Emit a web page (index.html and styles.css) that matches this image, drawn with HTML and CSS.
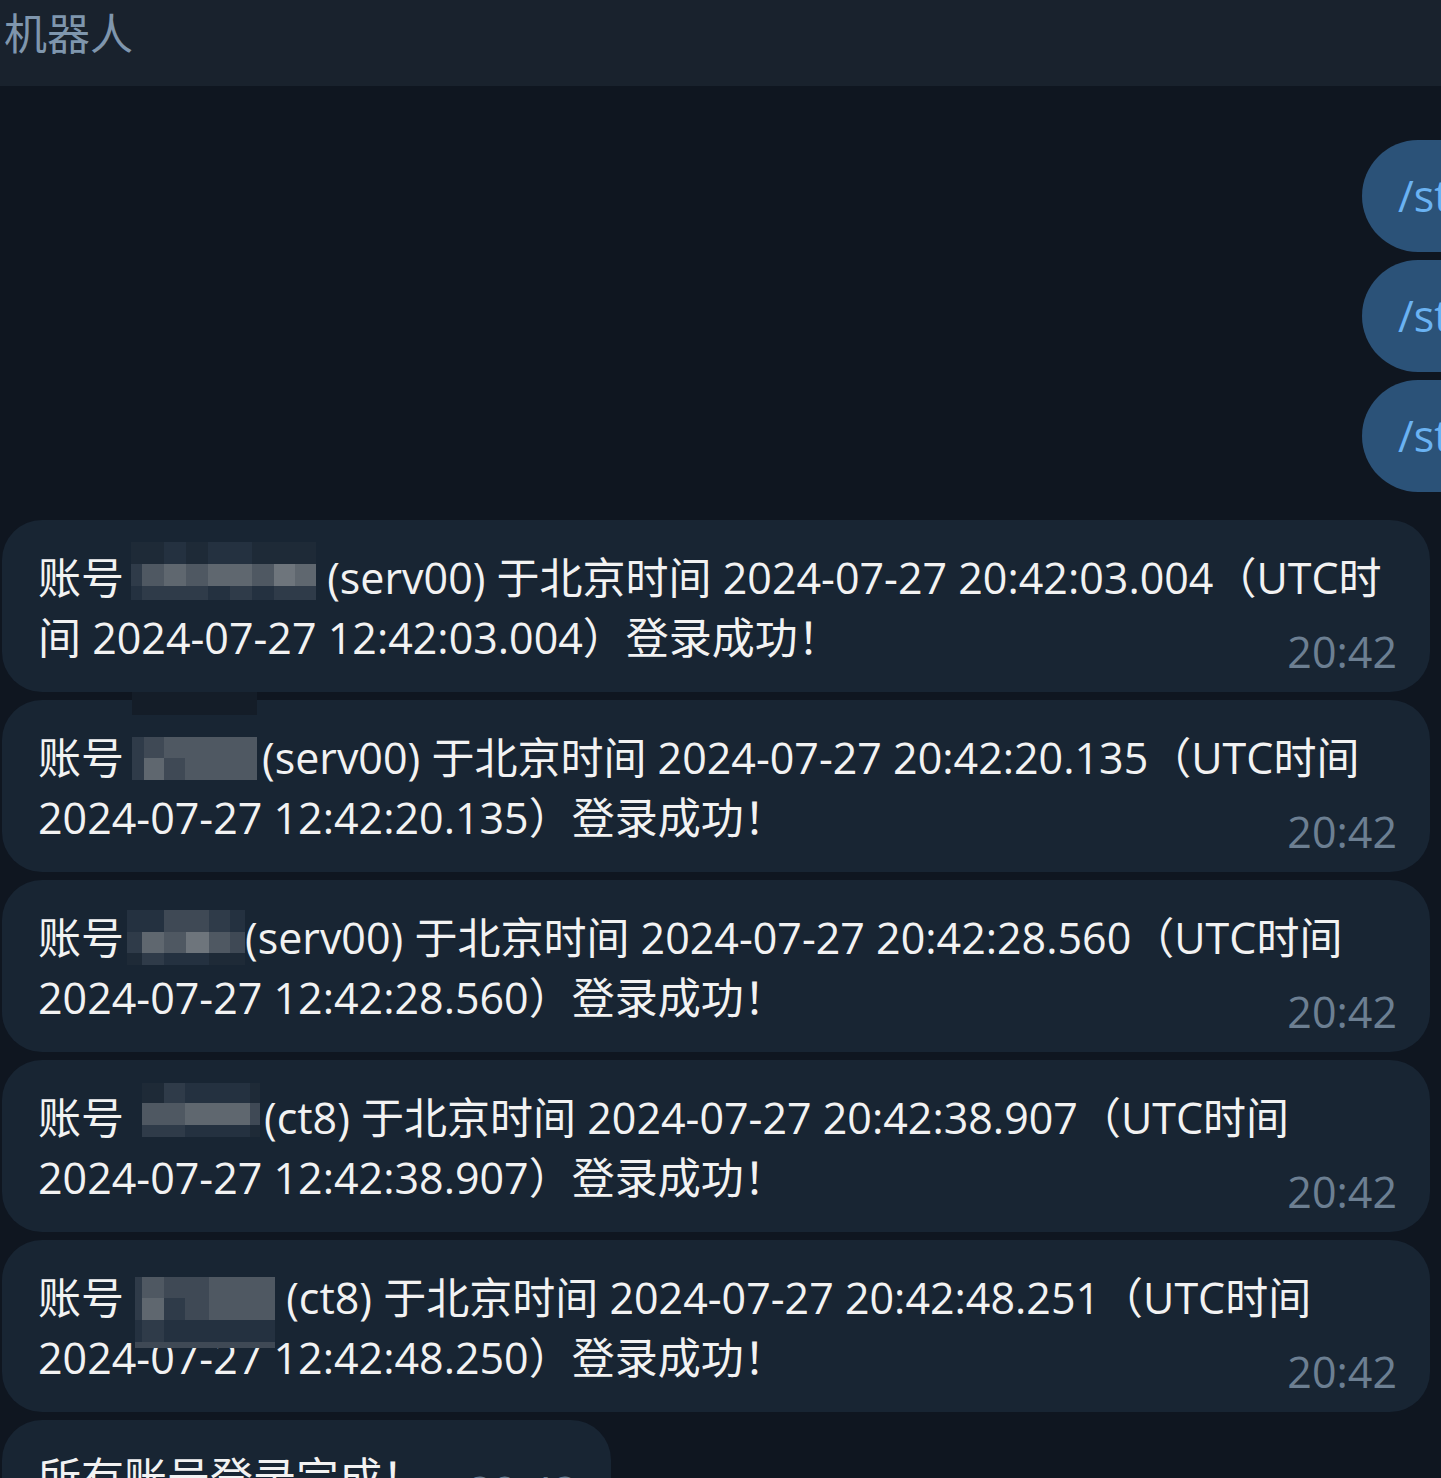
FILE: index.html
```html
<!DOCTYPE html>
<html lang="zh-CN">
<head>
    <meta charset="UTF-8">
    <meta name="viewport" content="width=device-width, initial-scale=1.0">
    <title>机器人</title>
    <link rel="stylesheet" href="styles.css">
</head>
<body>
    <header class="topbar">
        <span class="title">机器人</span>
    </header>

    <main class="chat">
        <div class="bubble out">/start</div>
        <div class="bubble out">/start</div>
        <div class="bubble out">/start</div>

        <div class="bubble in wide first">
            <div class="text">
                <div class="line">账号<span class="mask m1"><span class="px">
                    <i class="s0"></i><i class="s0"></i><i class="s1"></i><i class="s0"></i><i class="s1"></i><i class="s1"></i><i class="s0"></i><i class="s0"></i><i class="s0"></i>
                    <i class="s2"></i><i class="s4"></i><i class="s5"></i><i class="s4"></i><i class="s5"></i><i class="s5"></i><i class="s4"></i><i class="s6"></i><i class="s5"></i>
                    <i class="s1"></i><i class="s2"></i><i class="s2"></i><i class="s2"></i><i class="s1"></i><i class="s2"></i><i class="s1"></i><i class="s2"></i><i class="s2"></i>
                </span></span> (serv00) 于北京时间 2024-07-27 20:42:03.004（UTC时</div>
                <div class="line">间 2024-07-27 12:42:03.004）登录成功！</div>
            </div>
            <span class="time">20:42</span>
        </div>

        <div class="bubble in wide">
            <div class="text">
                <div class="line">账号<span class="mask m2"><span class="px">
                    <i class="sx"></i><i class="sx"></i><i class="sx"></i><i class="sx"></i>
                    <i class="st"></i><i class="st"></i><i class="st"></i><i class="st"></i>
                    <i class="s2"></i><i class="s3"></i><i class="s4"></i><i class="s4"></i>
                    <i class="s2"></i><i class="s5"></i><i class="s3"></i><i class="s4"></i>
                </span></span>(serv00) 于北京时间 2024-07-27 20:42:20.135（UTC时间</div>
                <div class="line">2024-07-27 12:42:20.135）登录成功！</div>
            </div>
            <span class="time">20:42</span>
        </div>

        <div class="bubble in wide">
            <div class="text">
                <div class="line">账号<span class="mask m3"><span class="px">
                    <i class="s1"></i><i class="s1"></i><i class="s3"></i><i class="s3"></i><i class="s2"></i><i class="s1"></i>
                    <i class="s2"></i><i class="s5"></i><i class="s4"></i><i class="s6"></i><i class="s4"></i><i class="s3"></i>
                    <i class="s0"></i><i class="s2"></i><i class="s1"></i><i class="s1"></i><i class="s0"></i><i class="s0"></i>
                </span></span>(serv00) 于北京时间 2024-07-27 20:42:28.560（UTC时间</div>
                <div class="line">2024-07-27 12:42:28.560）登录成功！</div>
            </div>
            <span class="time">20:42</span>
        </div>

        <div class="bubble in wide">
            <div class="text">
                <div class="line">账号<span class="mask m4"><span class="px">
                    <i class="s0"></i><i class="s2"></i><i class="s1"></i><i class="s0"></i>
                    <i class="s4"></i><i class="s4"></i><i class="s5"></i><i class="s3"></i>
                    <i class="s2"></i><i class="s2"></i><i class="s1"></i><i class="s0"></i>
                </span></span>(ct8) 于北京时间 2024-07-27 20:42:38.907（UTC时间</div>
                <div class="line">2024-07-27 12:42:38.907）登录成功！</div>
            </div>
            <span class="time">20:42</span>
        </div>

        <div class="bubble in wide">
            <div class="text">
                <div class="line">账号<span class="mask m5"><span class="px">
                    <i class="s2"></i><i class="s4"></i><i class="s3"></i><i class="s3"></i><i class="s4"></i>
                    <i class="s2"></i><i class="s5"></i><i class="s2"></i><i class="s3"></i><i class="s4"></i>
                    <i class="s1"></i><i class="s2"></i><i class="s1"></i><i class="s1"></i><i class="s1"></i>
                    <i class="s3"></i><i class="s3"></i><i class="s3"></i><i class="s3"></i><i class="s3"></i>
                </span></span> (ct8) 于北京时间 2024-07-27 20:42:48.251（UTC时间</div>
                <div class="line">2024-07-27 12:42:48.250）登录成功！</div>
            </div>
            <span class="time">20:42</span>
        </div>

        <div class="bubble in short">
            <div class="text">
                <div class="line">所有账号登录完成！</div>
            </div>
            <span class="time">20:42</span>
        </div>
    </main>
</body>
</html>
```

FILE: styles.css
```css
html, body {
    margin: 0;
    padding: 0;
    height: 100%;
    overflow: hidden;
    background-color: #0f1620;
}
body {
    font-family: "Open Sans", "Noto Sans CJK SC", sans-serif;
    display: flex;
    flex-direction: column;
}
.topbar {
    height: 86px;
    box-sizing: border-box;
    padding: 10px 4px 0;
    background-color: #19222d;
    flex-shrink: 0;
}
.title {
    font-family: "Noto Sans CJK SC", sans-serif;
    font-size: 43px;
    line-height: 43px;
    color: #7f96ad;
}
.chat {
    flex: 1;
    display: flex;
    flex-direction: column;
    align-items: flex-start;
    gap: 8px;
    padding: 54px 0 0 2px;
    overflow: hidden;
}
.bubble {
    box-sizing: border-box;
    border-radius: 40px;
    font-size: 43px;
}
.bubble.out {
    align-self: flex-end;
    width: 279px;
    margin-right: -200px;
    padding: 35px 36px;
    line-height: 42px;
    border-radius: 56px;
    background-color: #2b5278;
    color: #6ab2f2;
    white-space: nowrap;
}
.bubble.in {
    display: flex;
    align-items: flex-end;
    justify-content: space-between;
    padding: 28px 33px 24px 36px;
    background-color: #182533;
    color: #f2f2f2;
}
.bubble.wide {
    width: 1428px;
}
.bubble.first {
    margin-top: 20px;
}
.bubble.short {
    gap: 43px;
}
.text {
    flex: 1;
    min-width: 0;
}
.line {
    line-height: 60px;
    white-space: nowrap;
}
.time {
    flex-shrink: 0;
    line-height: 42px;
    margin-bottom: -5px;
    color: #6c7f92;
    white-space: nowrap;
}

/* blurred account names */
.mask {
    display: inline-block;
    position: relative;
    height: 60px;
    vertical-align: top;
}
.mask .px {
    position: absolute;
    left: 0;
    display: grid;
}
.mask i {
    display: block;
}
.m1 { width: 185px; margin-left: 7px; }
.m1 .px {
    top: -6px;
    grid-template-columns: 11px repeat(6, 22px) 21px 21px;
    grid-template-rows: 22px 22px 14px;
}
.m2 { width: 125px; margin: 0 5px 0 8px; }
.m2 .px {
    top: -36px;
    grid-template-columns: 12px 20px 21px 72px;
    grid-template-rows: 23px 22px 21px 22px;
}
.m3 { width: 118px; margin-left: 3px; }
.m3 .px {
    top: 2px;
    grid-template-columns: 15px 22px 22px 23px 21px 15px;
    grid-template-rows: 22px 21px 12px;
}
.m4 { width: 118px; margin: 0 4px 0 18px; }
.m4 .px {
    top: -5px;
    grid-template-columns: 22px 21px 65px 10px;
    grid-template-rows: 20px 22px 12px;
}
.m5 { width: 140px; margin-left: 11px; }
.m5 .px {
    top: 9px;
    grid-template-columns: 7px 22px 21px 24px 66px;
    grid-template-rows: 21px 22px 22px 6px;
}
.s0 { background-color: #1e2a37; }
.s1 { background-color: #243140; }
.s2 { background-color: #2f3b49; }
.s3 { background-color: #3f4955; }
.s4 { background-color: #4f5862; }
.s5 { background-color: #5f676f; }
.s6 { background-color: #6e757c; }
.sx { background-color: #141d28; }
.st { background-color: transparent; }
```
